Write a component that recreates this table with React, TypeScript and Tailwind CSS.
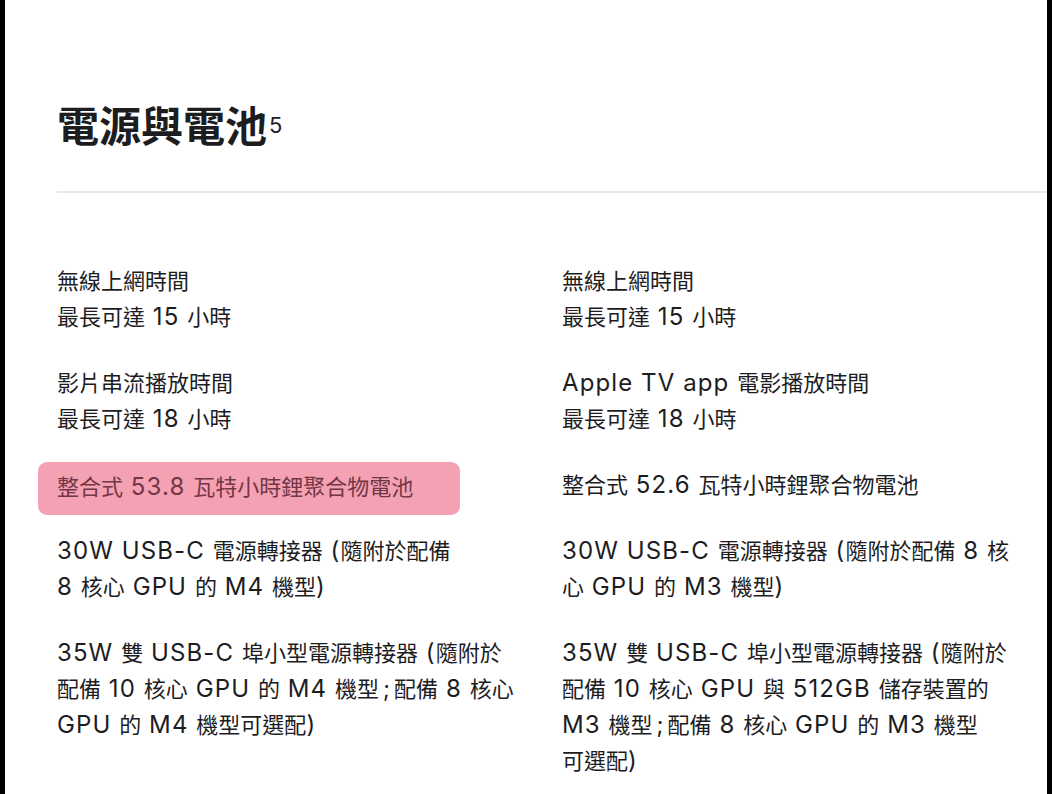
import React from "react";

const font = {
  fontFamily: 'Inter, "Noto Sans CJK TC", "Noto Sans", sans-serif',
};

function Mixed({ text }: { text: string }) {
  const parts = text.split(/(;|[\u0000-\u003A\u003C-\u024F]+)/).filter((p) => p && p.length > 0);
  return (
    <>
      {parts.map((p, i) =>
        p === ";" ? (
          <span key={i} className="mx-[4px] text-[23px]">
            ;
          </span>
        ) : /^[\u0000-\u024F]+$/.test(p) ? (
          <span key={i} className="text-[24px] tracking-[1.1px]">
            {p}
          </span>
        ) : (
          <span key={i}>{p}</span>
        )
      )}
    </>
  );
}

function Lines({ lines }: { lines: string[] }) {
  return (
    <div>
      {lines.map((l, i) => (
        <div key={i} className="whitespace-nowrap">
          <Mixed text={l} />
        </div>
      ))}
    </div>
  );
}

export default function App() {
  const rows: [React.ReactNode, React.ReactNode][] = [
    [
      <Lines lines={["無線上網時間", "最長可達 15 小時"]} />,
      <Lines lines={["無線上網時間", "最長可達 15 小時"]} />,
    ],
    [
      <Lines lines={["影片串流播放時間", "最長可達 18 小時"]} />,
      <Lines lines={["Apple TV app 電影播放時間", "最長可達 18 小時"]} />,
    ],
    [
      <div className="-ml-[19px] -mt-[5px] -mb-[12px] w-[422px] rounded-[9px] bg-[#f3a1b3] pt-[7px] pb-[10px] pl-[19px] text-[#733645] whitespace-nowrap">
        <Mixed text="整合式 53.8 瓦特小時鋰聚合物電池" />
      </div>,
      <Lines lines={["整合式 52.6 瓦特小時鋰聚合物電池"]} />,
    ],
    [
      <Lines lines={["30W USB-C 電源轉接器 (隨附於配備", "8 核心 GPU 的 M4 機型)"]} />,
      <Lines lines={["30W USB-C 電源轉接器 (隨附於配備 8 核", "心 GPU 的 M3 機型)"]} />,
    ],
    [
      <Lines
        lines={[
          "35W 雙 USB-C 埠小型電源轉接器 (隨附於",
          "配備 10 核心 GPU 的 M4 機型;配備 8 核心",
          "GPU 的 M4 機型可選配)",
        ]}
      />,
      <Lines
        lines={[
          "35W 雙 USB-C 埠小型電源轉接器 (隨附於",
          "配備 10 核心 GPU 與 512GB 儲存裝置的",
          "M3 機型;配備 8 核心 GPU 的 M3 機型",
          "可選配)",
        ]}
      />,
    ],
  ];

  return (
    <div
      className="h-[794px] w-[1052px] overflow-hidden border-x-[5px] border-black bg-white text-[#1d1d1f]"
      style={font}
    >
      <div className="pl-[52px] pt-[102px]">
        <h2 className="flex items-start text-[42px] font-bold leading-[50px]">
          <span>電源與電池</span>
          <span className="ml-[2px] mt-[12px] text-[22px] font-normal leading-none">5</span>
        </h2>
        <div className="mt-[39px] h-[2px] bg-[#e8e8e8]" />
        <div className="mt-[70px] grid grid-cols-[505px_1fr] gap-y-[30px] text-[22px] leading-[36px]">
          {rows.map(([a, b], i) => (
            <React.Fragment key={i}>
              <div>{a}</div>
              <div>{b}</div>
            </React.Fragment>
          ))}
        </div>
      </div>
    </div>
  );
}
